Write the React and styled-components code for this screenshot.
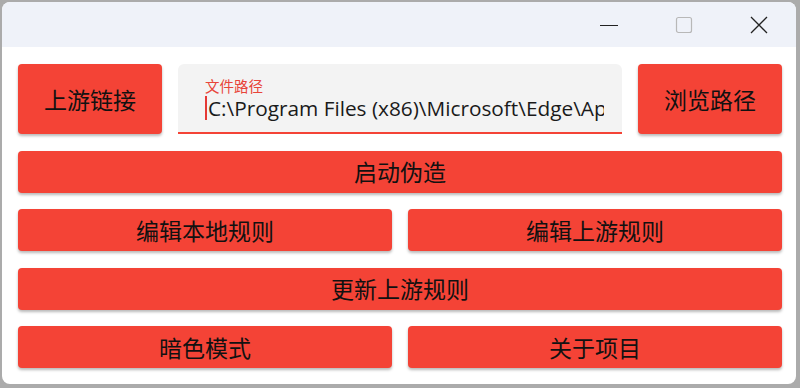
import React from "react";
import styled, { createGlobalStyle } from "styled-components";

const GlobalStyle = createGlobalStyle`
  html, body {
    margin: 0;
    padding: 0;
    background: #ababab;
    font-family: "Noto Sans CJK SC", "Noto Sans", sans-serif;
  }
  #root {
    padding: 2px 4px 4px 2px;
  }
`;

const Window = styled.div`
  width: 794px;
  height: 382px;
  background: #ffffff;
  border-radius: 8px;
  overflow: hidden;
  display: flex;
  flex-direction: column;
`;

const TitleBar = styled.div`
  height: 45px;
  background: #eff2f9;
  display: flex;
  justify-content: flex-end;
  align-items: stretch;
`;

const ControlButton = styled.div`
  width: 75px;
  display: flex;
  align-items: center;
  justify-content: center;
`;

const Content = styled.div`
  flex: 1;
  padding: 17px 14px 0 16px;
  display: flex;
  flex-direction: column;
  gap: 16.5px;
`;

const Row = styled.div`
  display: grid;
  grid-template-columns: ${(p) => p.$cols || "1fr"};
  gap: 16px;
  height: ${(p) => p.$height || 42}px;
`;

const Button = styled.button`
  border: none;
  margin: 0;
  padding: 0;
  background: #f44336;
  color: #111;
  border-radius: 4px;
  box-shadow: 0 2px 3px rgba(0, 0, 0, 0.28);
  font-family: "Noto Sans CJK SC", "Noto Sans", sans-serif;
  font-size: 23px;
  line-height: 1;
  display: flex;
  align-items: center;
  justify-content: center;
  cursor: pointer;
`;

const Field = styled.div`
  background: #f3f3f3;
  border-radius: 6px 6px 0 0;
  border-bottom: 2px solid #f44336;
  padding: 14px 18px 0 27px;
  display: flex;
  flex-direction: column;
  gap: 1px;
  overflow: hidden;
  min-width: 0;
`;

const FieldLabel = styled.div`
  color: #e8453a;
  font-size: 14.5px;
  line-height: 16px;
  font-family: "Noto Sans CJK SC", "Noto Sans", sans-serif;
`;

const FieldValue = styled.div`
  display: flex;
  align-items: center;
  height: 26px;
  line-height: 26px;
  font-family: "Open Sans", "Noto Sans", sans-serif;
  font-size: 20.8px;
  color: #1a1a1a;
  white-space: nowrap;
  overflow: hidden;
`;

const Caret = styled.span`
  display: inline-block;
  width: 2px;
  height: 24px;
  background: #e53935;
  margin-right: 1px;
  flex: none;
`;

const MinimizeIcon = () => (
  <svg width="20" height="20" viewBox="0 0 20 20">
    <line x1="1" y1="10.5" x2="19" y2="10.5" stroke="#222" strokeWidth="1.2" />
  </svg>
);

const MaximizeIcon = () => (
  <svg width="20" height="20" viewBox="0 0 20 20">
    <rect x="2.5" y="2.5" width="15" height="15" rx="2" fill="none" stroke="#b8b8b8" strokeWidth="1.2" />
  </svg>
);

const CloseIcon = () => (
  <svg width="20" height="20" viewBox="0 0 20 20">
    <path d="M2 2 L18 18 M18 2 L2 18" stroke="#222" strokeWidth="1.3" fill="none" />
  </svg>
);

export default function App() {
  return (
    <>
      <GlobalStyle />
      <Window>
        <TitleBar>
          <ControlButton><MinimizeIcon /></ControlButton>
          <ControlButton><MaximizeIcon /></ControlButton>
          <ControlButton><CloseIcon /></ControlButton>
        </TitleBar>
        <Content>
          <Row $cols="144px 1fr 144px" $height={70}>
            <Button>上游链接</Button>
            <Field>
              <FieldLabel>文件路径</FieldLabel>
              <FieldValue>
                <Caret />
                C:\Program Files (x86)\Microsoft\Edge\Application
              </FieldValue>
            </Field>
            <Button>浏览路径</Button>
          </Row>
          <Row>
            <Button>启动伪造</Button>
          </Row>
          <Row $cols="1fr 1fr">
            <Button>编辑本地规则</Button>
            <Button>编辑上游规则</Button>
          </Row>
          <Row>
            <Button>更新上游规则</Button>
          </Row>
          <Row $cols="1fr 1fr">
            <Button>暗色模式</Button>
            <Button>关于项目</Button>
          </Row>
        </Content>
      </Window>
    </>
  );
}
